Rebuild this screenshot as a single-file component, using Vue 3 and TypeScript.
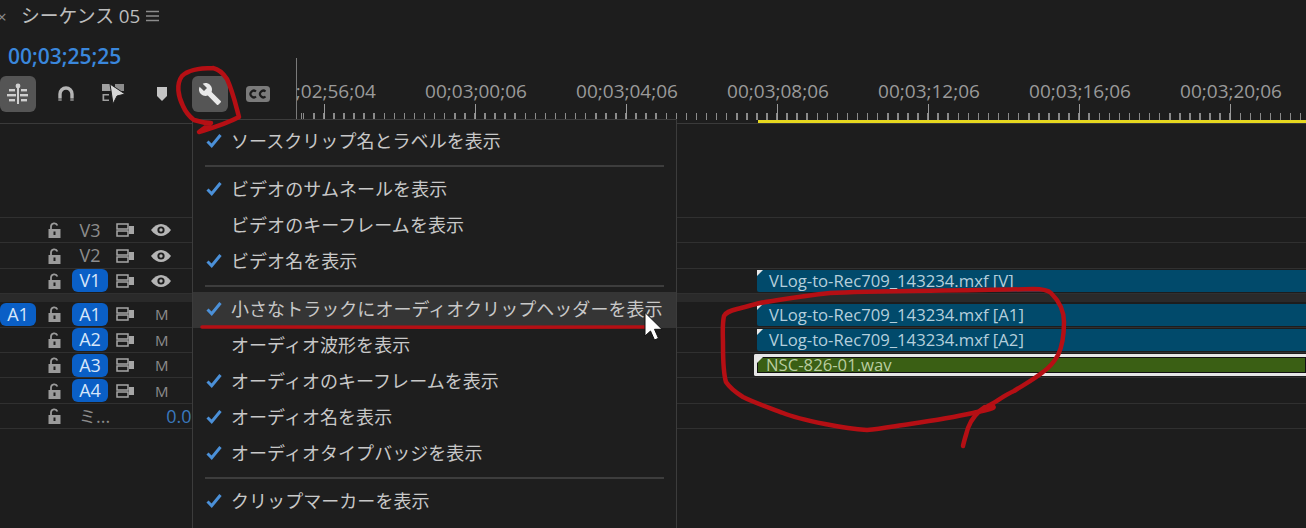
<template>
  <div class="page">
    <header class="tabs">
      <span class="close">×</span>
      <span class="title">シーケンス 05</span>
      <svg class="burger" width="13" height="12" viewBox="0 0 13 12"><path d="M0 1.5h13M0 6h13M0 10.5h13" stroke="#8c8c8c" stroke-width="1.6" /></svg>
    </header>

    <section class="top">
      <div class="tools">
        <div class="timecode">00;03;25;25</div>
        <div class="toolbar">
          <button class="tool on">
            <svg width="24" height="24" viewBox="0 0 24 24" fill="#cfcfcf">
              <rect x="11" y="2" width="2" height="20" />
              <circle cx="12" cy="4" r="2.4" />
              <rect x="3" y="7" width="6" height="2.4" /><rect x="15" y="7" width="6" height="2.4" />
              <rect x="1" y="12" width="9" height="2.4" /><rect x="14" y="12" width="8" height="2.4" />
              <rect x="3" y="17" width="6" height="2.4" /><rect x="15" y="17" width="6" height="2.4" />
            </svg>
          </button>
          <button class="tool magnet">
            <svg width="18" height="18" viewBox="0 0 18 18" fill="none">
              <path d="M3 13V9a6 6 0 0 1 12 0v4" stroke="#b5b5b5" stroke-width="3.4" />
              <path d="M3 13v3M15 13v3" stroke="#777" stroke-width="3.4" />
            </svg>
          </button>
          <button class="tool linked">
            <svg width="24" height="22" viewBox="0 0 24 22">
              <path d="M1 1h9v7H1z" fill="#a0a0a0" />
              <path d="M14 1h9v7h-9z" fill="#8c8c8c" />
              <path d="M8 11H1.500v7H8v-1.600H3.200v-3.800H8z" fill="#a0a0a0" />
              <path d="M9 1l15 10-8 2-4 8z" fill="#d6d6d6" stroke="#1d1d1d" stroke-width="1" />
            </svg>
          </button>
          <button class="tool marker">
            <svg width="12" height="14" viewBox="0 0 12 14"><path d="M1 0h10v9l-5 5-5-5z" fill="#c4c4c4" /></svg>
          </button>
          <button class="tool on wrench">
            <svg width="24" height="24" viewBox="0 0 24 24">
              <path d="M22.7 19l-9.1-9.1c.9-2.3.4-5-1.500-6.900-2-2-5-2.400-7.400-1.300L9 6 6 9 1.600 4.700C.4 7.100.9 10.100 2.900 12.100c1.900 1.900 4.600 2.400 6.900 1.500l9.100 9.100c.4.4 1 .4 1.400 0l2.300-2.300c.5-.4.5-1.100.1-1.400z" fill="#e8e8e8" />
            </svg>
          </button>
          <button class="tool cc">
            <svg width="24" height="16" viewBox="0 0 24 16">
              <rect width="24" height="16" rx="3.5" fill="#7b7b7b" />
              <path d="M10 5.500a3.300 3.300 0 1 0 0 5M19.500 5.500a3.300 3.300 0 1 0 0 5" fill="none" stroke="#1c1c1c" stroke-width="2.200" />
            </svg>
          </button>
        </div>
      </div>
      <div class="ruler">
        <div class="labels">
          <div v-for="label in rulerLabels" :key="label" class="cell">{{ label }}</div>
        </div>
        <div class="ticks"></div>
        <div class="work-bar"></div>
      </div>
    </section>

    <div class="spacer"></div>

    <section class="tracks">
      <div
        v-for="track in tracks"
        :key="track.name"
        class="row"
        :class="{ tall: track.name !== 'gap' }"
      >
        <template v-if="track.name !== 'gap'">
          <div class="head">
            <span class="source" :class="{ show: track.source }">{{ track.source }}</span>
            <svg class="lock" width="13" height="16" viewBox="0 0 13 16">
              <path d="M3 7V4.500a3.300 3.300 0 0 1 6.400-1" fill="none" stroke="#9a9a9a" stroke-width="1.800" />
              <path d="M0.500 7h12v9h-12z" fill="#9a9a9a" />
              <rect x="5.500" y="9.500" width="2" height="3.500" fill="#1d1d1d" />
            </svg>
            <span class="target" :class="{ active: track.active, mix: track.mix }">{{ track.name }}</span>
            <template v-if="!track.mix">
              <svg class="sync" width="19" height="14" viewBox="0 0 19 14">
                <path d="M1 1h11v5H1zM1 8h11v5H1z" fill="none" stroke="#a6a6a6" stroke-width="1.500" />
                <path d="M13 3h5v8h-5z" fill="#a6a6a6" />
              </svg>
              <svg v-if="track.video" class="eye" width="20" height="12" viewBox="0 0 20 12">
                <path d="M0 6c3-4 6.500-6 10-6s7 2 10 6c-3 4-6.500 6-10 6S3 10 0 6z" fill="#b5b5b5" />
                <circle cx="10" cy="6" r="3.600" fill="#1d1d1d" />
                <circle cx="10" cy="6" r="1.700" fill="#b5b5b5" />
              </svg>
              <span v-else class="mute">M</span>
            </template>
            <span v-else class="volume">0.0</span>
          </div>
          <div class="lane">
            <div v-if="track.clip" class="clip" :class="track.clipKind">{{ track.clip }}</div>
          </div>
        </template>
      </div>
    </section>

    <nav class="menu">
      <template v-for="(item, i) in menuItems" :key="i">
        <div v-if="item === null" class="sep"></div>
        <div v-else class="item" :class="{ hover: item.hover }">
          <svg v-if="item.checked" class="check" width="16" height="15" viewBox="0 0 16 15">
            <path d="M1.500 8.500l4.200 4.200L14.500 2" fill="none" stroke="#4b90d8" stroke-width="3" />
          </svg>
          <span class="text">{{ item.label }}</span>
        </div>
      </template>
    </nav>

    <!-- 手書きの赤い注釈とカーソル -->
    <svg class="ink" width="1306" height="528" viewBox="0 0 1306 528" fill="none">
      <g stroke="#b50f14" stroke-width="4.500" stroke-linecap="round" stroke-linejoin="round">
        <path d="M213 68C200 68 188 70 182 76C176 84 178 96 183 106C186 113 190 117 194 120C200 122 205 123 211 123L199 132C212 128 226 124 239 117C236 106 233 92 227 79C223 73 218 69 213 68" />
        <path d="M202 327C300 328 520 327 645 327" stroke-width="3.500" />
        <path d="M760 303C780 300 800 296 830 293C870 291 950 291 1033 289C1042 289 1048 290 1051 293C1058 300 1064 310 1064 322C1064 335 1063 345 1058 355C1053 364 1049 368 1043 372C1033 380 1025 384 1014 391C1003 396 996 402 988 406C994 405 996 408 990 409C982 411 978 412 973 413C950 418 930 421 910 424C890 427 880 429 867 430C850 429 840 427 825 424C810 421 795 418 783 413C770 408 755 403 743 397C735 392 730 388 726 382C723 372 723 360 723 345C723 335 722 325 724 316C726 312 730 311 737 309C745 307 752 305 760 303" />
        <path d="M985 407C977 412 971 420 968 428C966 435 964 441 963 446" />
      </g>
      <path d="M645 312.500V336l5.500-5 4 9 4-1.700-4-9h7.500z" fill="#fff" stroke="#111" stroke-width="1" />
    </svg>
  </div>
</template>

<script setup lang="ts">
interface Track {
  name: string;
  source?: string;
  active?: boolean;
  video?: boolean;
  mix?: boolean;
  clip?: string;
  clipKind?: string;
}

interface MenuItem {
  label: string;
  checked?: boolean;
  hover?: boolean;
}

const rulerLabels = [
  "00;02;56;04",
  "00;03;00;06",
  "00;03;04;06",
  "00;03;08;06",
  "00;03;12;06",
  "00;03;16;06",
  "00;03;20;06",
];

const tracks: Track[] = [
  { name: "V3", video: true },
  { name: "V2", video: true },
  { name: "V1", video: true, active: true, clip: "VLog-to-Rec709_143234.mxf [V]", clipKind: "blue" },
  { name: "gap" },
  { name: "A1", source: "A1", active: true, clip: "VLog-to-Rec709_143234.mxf [A1]", clipKind: "blue" },
  { name: "A2", active: true, clip: "VLog-to-Rec709_143234.mxf [A2]", clipKind: "blue" },
  { name: "A3", active: true, clip: "NSC-826-01.wav", clipKind: "green" },
  { name: "A4", active: true },
  { name: "ミ...", mix: true },
];

// null はセパレーター
const menuItems: (MenuItem | null)[] = [
  { label: "ソースクリップ名とラベルを表示", checked: true },
  null,
  { label: "ビデオのサムネールを表示", checked: true },
  { label: "ビデオのキーフレームを表示" },
  { label: "ビデオ名を表示", checked: true },
  null,
  { label: "小さなトラックにオーディオクリップヘッダーを表示", checked: true, hover: true },
  { label: "オーディオ波形を表示" },
  { label: "オーディオのキーフレームを表示", checked: true },
  { label: "オーディオ名を表示", checked: true },
  { label: "オーディオタイプバッジを表示", checked: true },
  null,
  { label: "クリップマーカーを表示", checked: true },
];
</script>

<style scoped>
.page {
  position: relative;
  width: 1306px;
  height: 528px;
  overflow: hidden;
  background: #1d1d1d;
  color: #b0b0b0;
  font-family: "Open Sans", "Noto Sans CJK JP", sans-serif;
}

.tabs {
  display: flex;
  align-items: center;
  height: 34px;
  padding-bottom: 2px;
  box-sizing: border-box;
}
.close {
  width: 22px;
  margin-left: -3px;
  margin-right: 3px;
  font-size: 17px;
  color: #8a8a8a;
  text-align: left;
}
.title {
  margin-left: -1px;
  font-family: "Open Sans", "Noto Sans CJK JP", sans-serif;
  font-size: 18.800px;
  line-height: 24px;
  color: #bdbdbd;
}
.burger {
  margin-left: 6px;
}

.top {
  display: flex;
  height: 90px;
  border-bottom: 1px solid #3a3a3a;
  box-sizing: border-box;
}
.tools {
  width: 296px;
  flex: none;
}
.timecode {
  height: 42px;
  padding: 10px 0 0 8px;
  box-sizing: border-box;
  font-size: 21px;
  font-weight: 600;
  line-height: 24px;
  color: #3a87dc;
}
.toolbar {
  display: flex;
  align-items: center;
  height: 36px;
}
.tool {
  display: flex;
  align-items: center;
  justify-content: center;
  width: 36px;
  height: 36px;
  padding: 0;
  border: 0;
  border-radius: 6px;
  background: none;
}
.tool.on {
  background: #555;
}
.magnet {
  margin-left: 12px;
}
.linked {
  margin-left: 11px;
}
.marker {
  margin-left: 13px;
}
.wrench {
  margin-left: 12px;
}
.cc {
  margin-left: 12px;
}

.ruler {
  flex: 1;
  display: flex;
  flex-direction: column;
  margin-top: 24px;
  overflow: hidden;
  border-left: 1px solid #7a7a7a;
}
.labels {
  display: flex;
  margin-left: -49px;
  height: 62px;
  flex: none;
}
.cell {
  position: relative;
  flex: 0 0 151px;
  padding: 21px 0 0 3px;
  box-sizing: border-box;
  text-align: center;
  font-size: 19px;
  line-height: 24px;
  color: #9a9a9a;
  white-space: nowrap;
}
.cell::after {
  content: "";
  position: absolute;
  left: 50%;
  top: 46px;
  bottom: 0;
  width: 1px;
  background: #9a9a9a;
}
.ticks {
  height: 7px;
  margin-top: -7px;
  flex: none;
  background: repeating-linear-gradient(90deg, #8a8a8a 0 1.500px, transparent 1.500px 10.070px);
  background-position: 6px 0;
}
.work-bar {
  height: 3px;
  flex: none;
  margin-left: 461px;
  background: #e6d81f;
}

.spacer {
  height: 93px;
}

.tracks {
  border-top: 1px solid #303030;
}
.row {
  display: flex;
  height: 8px;
  background: #2a2a2a;
}
.row.tall {
  height: 25.400px;
  box-sizing: border-box;
  background: none;
  border-bottom: 1px solid #303030;
}
.head {
  display: flex;
  align-items: center;
  flex: 0 0 296px;
}
.source {
  flex: 0 0 36px;
  height: 23px;
  border-radius: 6px;
  font-size: 18px;
  line-height: 23px;
  text-align: center;
}
.source.show,
.target.active {
  background: #0a5fc6;
  color: #d6e6fa;
}
.lock {
  margin-left: 12px;
}
.target {
  flex: 0 0 36px;
  height: 23px;
  margin-left: 11px;
  border-radius: 6px;
  font-size: 18px;
  line-height: 23px;
  text-align: center;
  color: #8c8c8c;
}
.target.mix {
  padding-left: 7px;
  box-sizing: border-box;
  white-space: nowrap;
  font-family: "Noto Sans CJK JP", sans-serif;
  font-size: 17px;
  text-align: left;
}
.sync {
  margin-left: 8px;
}
.eye {
  margin-left: 16px;
}
.mute {
  margin-left: 20px;
  font-size: 15px;
  color: #8c8c8c;
}
.volume {
  margin-left: 56px;
  font-size: 18px;
  color: #3a78bd;
}
.lane {
  flex: 1;
  padding-left: 461px;
}
.clip {
  position: relative;
  height: 22px;
  margin-top: 1.500px;
  padding-left: 12px;
  border-radius: 2px 0 0 2px;
  font-size: 16.700px;
  line-height: 22px;
  white-space: nowrap;
}
.clip::before {
  content: "";
  position: absolute;
  left: 0;
  top: 0;
  width: 0;
  height: 0;
  border-top: 6px solid #e8e8e8;
  border-right: 6px solid transparent;
}
.clip.blue {
  background: #014a6b;
  color: #b5cfdc;
}
.clip.green {
  height: 16px;
  margin: 1px 0 0 -3px;
  padding-left: 9px;
  border: 3px solid #e6e6e6;
  border-right: 0;
  box-shadow: inset 0 0 0 1px #111;
  background: #3a5f14;
  color: #b9cda0;
  line-height: 15px;
}

.menu {
  position: absolute;
  left: 192px;
  top: 119px;
  width: 485px;
  bottom: 0;
  padding-top: 4px;
  box-sizing: border-box;
  border: 1px solid #3c3c3c;
  border-bottom: 0;
  background: #1e1e1e;
  font-family: "Noto Sans CJK JP", sans-serif;
}
.item {
  display: flex;
  align-items: center;
  height: 36px;
  padding: 0 0 4px 38px;
  box-sizing: border-box;
  position: relative;
}
.item.hover {
  background: #353535;
}
.check {
  position: absolute;
  left: 13px;
  top: 9px;
}
.text {
  font-size: 18px;
  letter-spacing: 0.05px;
  color: #c8c8c8;
  white-space: nowrap;
}
.sep {
  height: 2px;
  margin: 5px 12px;
  background: #3d3d3d;
}

.ink {
  position: absolute;
  left: 0;
  top: 0;
  pointer-events: none;
}
</style>
